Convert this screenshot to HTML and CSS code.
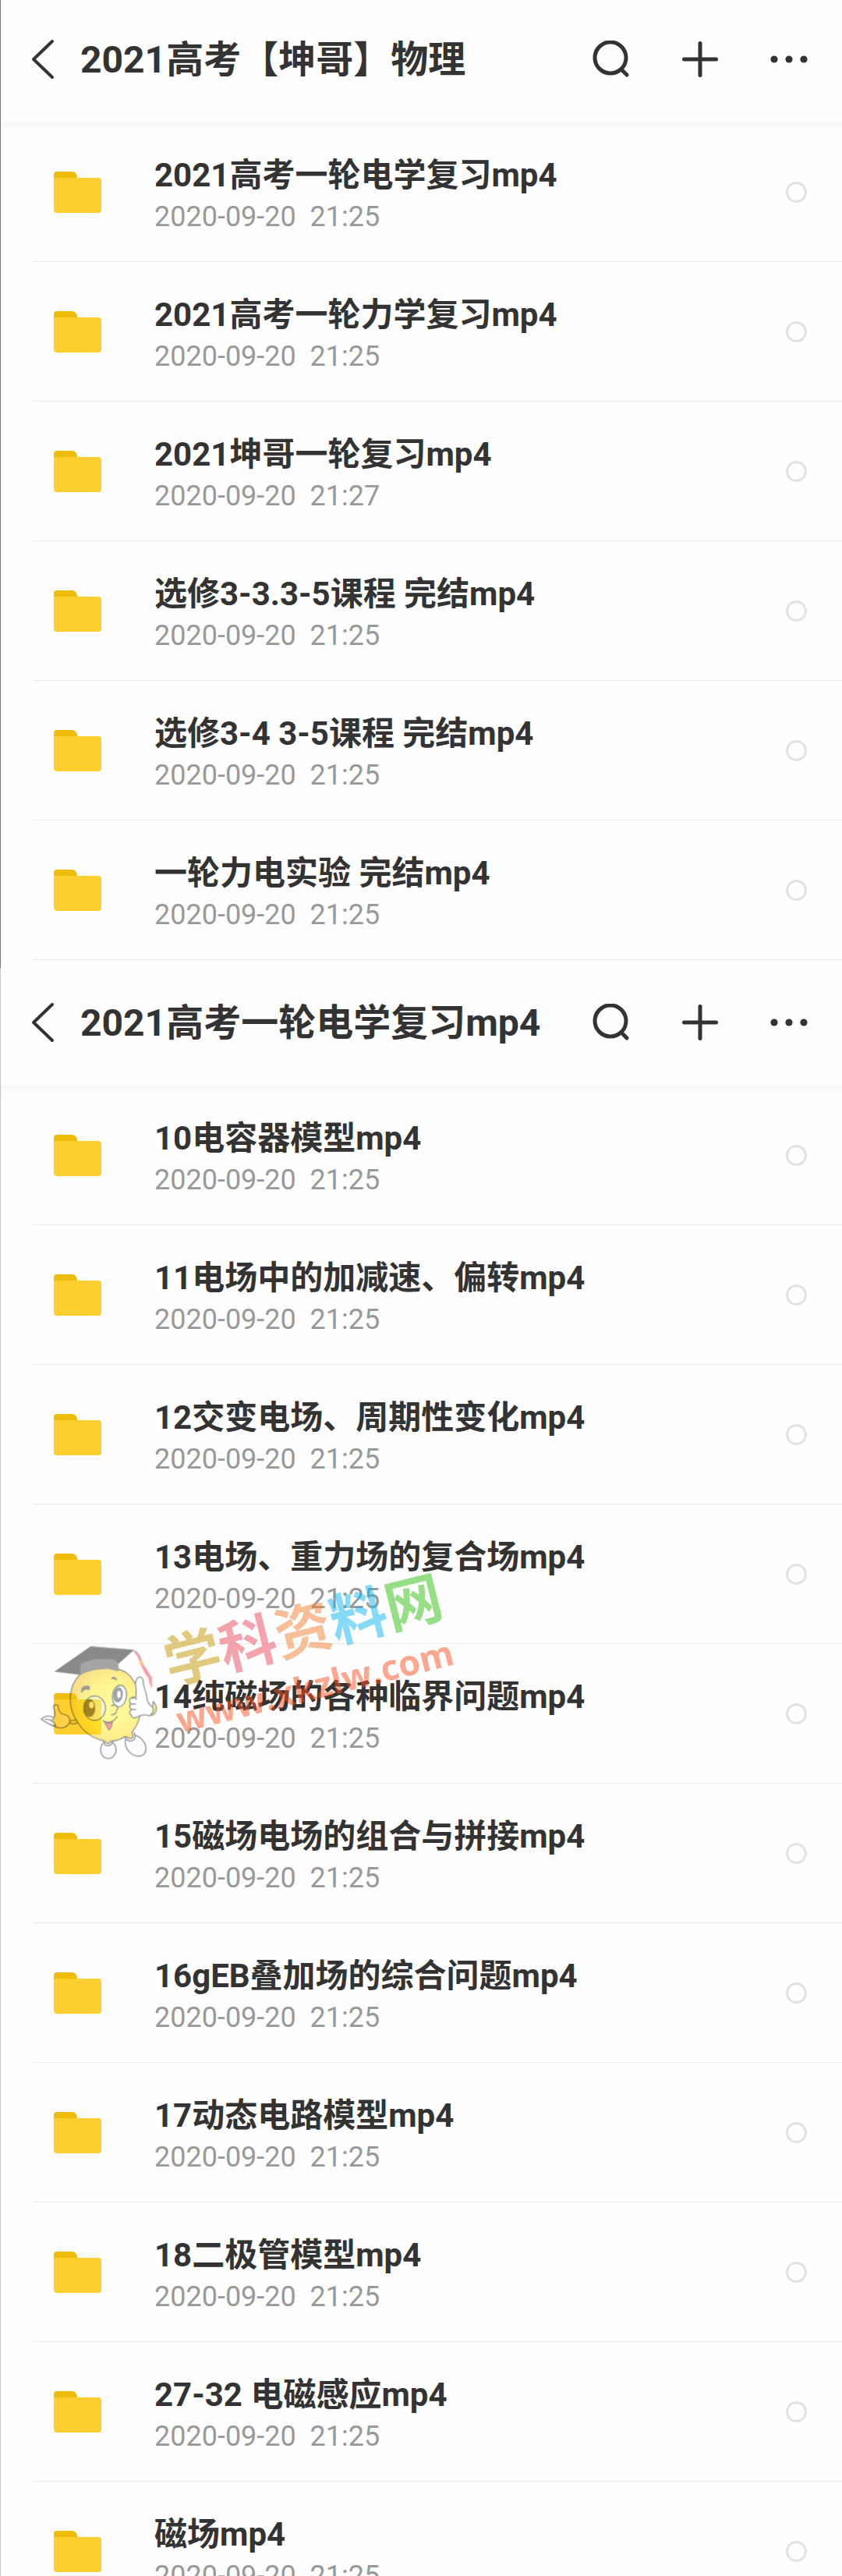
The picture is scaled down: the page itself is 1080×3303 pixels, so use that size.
FILE: index.html
```html
<!DOCTYPE html>
<html lang="zh-CN">
<head>
<meta charset="utf-8">
<meta name="viewport" content="width=device-width, initial-scale=1">
<title>2021高考【坤哥】物理</title>
<link rel="stylesheet" href="styles.css">
</head>
<body>
<svg class="sprite" aria-hidden="true">
  <symbol id="folder" viewBox="0 0 61 53">
    <path d="M0 12V4a4 4 0 0 1 4-4h19c4 0 7 3 7 8v4z" fill="#f0bc0a"/>
    <path d="M0 8h57a4 4 0 0 1 4 4v37a4 4 0 0 1-4 4H4a4 4 0 0 1-4-4z" fill="#ffcf30"/>
  </symbol>
  <symbol id="back" viewBox="0 0 30 52">
    <path d="M27 3L3 26l24 23" fill="none" stroke="#333" stroke-width="4" stroke-linecap="round" stroke-linejoin="round"/>
  </symbol>
  <symbol id="search" viewBox="0 0 48 48">
    <circle cx="23" cy="22" r="20" fill="none" stroke="#333" stroke-width="5"/>
    <path d="M38 38l6 6" stroke="#333" stroke-width="5" stroke-linecap="round"/>
  </symbol>
  <symbol id="plus" viewBox="0 0 48 48">
    <path d="M3.500 24h41M24 3.500v41" stroke="#333" stroke-width="5" stroke-linecap="round"/>
  </symbol>
  <symbol id="more" viewBox="0 0 48 48">
    <g fill="#333"><circle cx="5" cy="24" r="4.600"/><circle cx="24" cy="24" r="4.600"/><circle cx="43" cy="24" r="4.600"/></g>
  </symbol>
</svg>

<main class="app">
  <section class="screen screen-root">
    <header class="bar">
      <button class="back" type="button" aria-label="返回"><svg><use href="#back"/></svg></button>
      <h1 class="title">2021高考【坤哥】物理</h1>
      <div class="actions">
        <button type="button" aria-label="搜索"><svg><use href="#search"/></svg></button>
        <button type="button" aria-label="新建"><svg><use href="#plus"/></svg></button>
        <button type="button" aria-label="更多"><svg><use href="#more"/></svg></button>
      </div>
    </header>
    <ul class="files">
      <li><label class="file"><svg class="folder"><use href="#folder"/></svg><span class="info"><span class="name">2021高考一轮电学复习mp4</span><span class="date">2020-09-20  21:25</span></span><input type="checkbox"></label></li>
      <li><label class="file"><svg class="folder"><use href="#folder"/></svg><span class="info"><span class="name">2021高考一轮力学复习mp4</span><span class="date">2020-09-20  21:25</span></span><input type="checkbox"></label></li>
      <li><label class="file"><svg class="folder"><use href="#folder"/></svg><span class="info"><span class="name">2021坤哥一轮复习mp4</span><span class="date">2020-09-20  21:27</span></span><input type="checkbox"></label></li>
      <li><label class="file"><svg class="folder"><use href="#folder"/></svg><span class="info"><span class="name">选修3-3.3-5课程 完结mp4</span><span class="date">2020-09-20  21:25</span></span><input type="checkbox"></label></li>
      <li><label class="file"><svg class="folder"><use href="#folder"/></svg><span class="info"><span class="name">选修3-4 3-5课程 完结mp4</span><span class="date">2020-09-20  21:25</span></span><input type="checkbox"></label></li>
      <li><label class="file"><svg class="folder"><use href="#folder"/></svg><span class="info"><span class="name">一轮力电实验 完结mp4</span><span class="date">2020-09-20  21:25</span></span><input type="checkbox"></label></li>
    </ul>
  </section>

  <section class="screen screen-sub">
    <header class="bar">
      <button class="back" type="button" aria-label="返回"><svg><use href="#back"/></svg></button>
      <h2 class="title">2021高考一轮电学复习mp4</h2>
      <div class="actions">
        <button type="button" aria-label="搜索"><svg><use href="#search"/></svg></button>
        <button type="button" aria-label="新建"><svg><use href="#plus"/></svg></button>
        <button type="button" aria-label="更多"><svg><use href="#more"/></svg></button>
      </div>
    </header>
    <ul class="files">
      <li><label class="file"><svg class="folder"><use href="#folder"/></svg><span class="info"><span class="name">10电容器模型mp4</span><span class="date">2020-09-20  21:25</span></span><input type="checkbox"></label></li>
      <li><label class="file"><svg class="folder"><use href="#folder"/></svg><span class="info"><span class="name">11电场中的加减速、偏转mp4</span><span class="date">2020-09-20  21:25</span></span><input type="checkbox"></label></li>
      <li><label class="file"><svg class="folder"><use href="#folder"/></svg><span class="info"><span class="name">12交变电场、周期性变化mp4</span><span class="date">2020-09-20  21:25</span></span><input type="checkbox"></label></li>
      <li><label class="file"><svg class="folder"><use href="#folder"/></svg><span class="info"><span class="name">13电场、重力场的复合场mp4</span><span class="date">2020-09-20  21:25</span></span><input type="checkbox"></label></li>
      <li class="marked">
        <label class="file"><svg class="folder"><use href="#folder"/></svg><span class="info"><span class="name">14纯磁场的各种临界问题mp4</span><span class="date">2020-09-20  21:25</span></span><input type="checkbox"></label>
        <svg class="watermark" viewBox="0 -40 560 300">
          <defs>
            <radialGradient id="skin" cx="0.6" cy="0.5" r="0.6">
              <stop offset="0" stop-color="#fffb3c"/><stop offset="0.6" stop-color="#fdea20"/><stop offset="1" stop-color="#f5bd12"/>
            </radialGradient>
            <linearGradient id="iris" x1="0" y1="0" x2="1" y2="0.4">
              <stop offset="0" stop-color="#4da8c8"/><stop offset="0.5" stop-color="#d8f0f8"/><stop offset="1" stop-color="#fff"/>
            </linearGradient>
          </defs>
          <g opacity="0.5">
            <g transform="translate(0 60) scale(0.333)" stroke="#222" stroke-width="4" stroke-linejoin="round" stroke-linecap="round">
              <ellipse cx="297" cy="461" rx="30" ry="34" fill="#f4f9ff"/>
              <ellipse cx="402" cy="445" rx="34" ry="46" transform="rotate(-42 402 445)" fill="#f4f9ff"/>
              <path d="M278 425q2 22 20 20q17-2 15-20M360 405q4 25 25 22q22-5 12-32" fill="#ddd"/>
              <path d="M150 348q16 2 26-4v14q-12 6-26 2z" fill="#f5bd12"/>
              <path d="M470 275q20 22 8 44q-12 14-30 8l2-12q18-4 20-40z" fill="#fde420"/>
              <path d="M150 270Q150 205 192 168Q240 145 300 147Q352 145 382 178Q420 225 423 290Q420 360 388 392L392 410Q384 424 370 412L362 410Q335 428 308 427L300 436Q288 438 282 427Q215 412 182 360Q152 320 150 270Z" fill="url(#skin)"/>
              <path d="M230 62l166 14-60 54q-70-24-134 0l-12 42-101-12z" fill="#151515" stroke="none"/>
              <path d="M190 170q-3-28 5-42q50-24 130-12q14 14 10 42q-70-26-145 12z" fill="#4c4c4c" stroke="#444" stroke-width="2"/>
              <path d="M230 64l164 12" fill="none" stroke="#777" stroke-width="3" stroke-dasharray="4 4"/>
              <path d="M192 244q-4-28 20-30q20-2 12 18q-18-8-32 12z" fill="#333" stroke="none"/>
              <path d="M308 188q2-12 14-7q10 5 8 13q-10-7-22-6z" fill="#333" stroke="none"/>
              <ellipse cx="340" cy="254" rx="27" ry="42" fill="url(#iris)" transform="rotate(8 340 254)"/>
              <ellipse cx="335" cy="250" rx="15" ry="26" fill="#555" transform="rotate(8 335 250)"/>
              <ellipse cx="338" cy="248" rx="7" ry="13" fill="#fff" stroke="none"/>
              <ellipse cx="244" cy="301" rx="42" ry="47" fill="url(#iris)" fill-opacity="0.5"/>
              <ellipse cx="225" cy="300" rx="19" ry="32" fill="#4a3510"/>
              <ellipse cx="232" cy="289" rx="9" ry="13" fill="#fff0a0" stroke="none"/>
              <path d="M309 292q15-8 23 4q3 12-5 14M308 325q12 4 20-9" fill="none"/>
              <path d="M277 350q32 16 54-16" fill="none"/>
              <path d="M283 355q18 8 30 0q-2 20-12 32q-12-12-18-32z" fill="#ef3940" stroke-width="3"/>
              <path d="M39 343q22-18 48-5q10-12-2-43q6-12 18-4q4 34 24 34q24 6 22 28q-10 26-42 24q-26-6-68-34z" fill="#fbd060"/>
              <path d="M39 343q22-20 48-6q-2 10-10 12q14 8 18 20q-30-4-56-26z" fill="#fff"/>
              <path d="M53 344q22-2 34 12" fill="none"/>
              <path d="M385 328q-12-12 1-22q-12-10-3-21q-10-16 3-25q8-4 18-2q2-26-2-50q0-24 16-28q16 2 14 28q8 28 14 50q-2 22 24 42q4 22-16 30q-24-10-52 8q-14 2-17-10z" fill="#fff"/>
              <path d="M386 306h16M383 285h18M388 262q10-1 18 4" fill="none"/>
              <path d="M388 78q28-4 40 48q20 30 38 58l-1 42q-12-20-14-42q-12-10-30-52q-10-36-33-54z" fill="#ee4450" stroke="none"/>
              <circle cx="424" cy="127" r="8" fill="#f59a30" stroke="none"/>
            </g>
            <g transform="translate(178 130) rotate(-14)">
              <text class="mark-cn"><tspan fill="#c19701">学</tspan><tspan fill="#eb475b">科</tspan><tspan fill="#f17f31">资</tspan><tspan fill="#0db7f7">料</tspan><tspan fill="#31c111">网</tspan></text>
            </g>
            <text class="mark-url" transform="translate(191 192) rotate(-14)" fill="#ff4f1f">www.xkzlw.com</text>
          </g>
        </svg>
      </li>
      <li><label class="file"><svg class="folder"><use href="#folder"/></svg><span class="info"><span class="name">15磁场电场的组合与拼接mp4</span><span class="date">2020-09-20  21:25</span></span><input type="checkbox"></label></li>
      <li><label class="file"><svg class="folder"><use href="#folder"/></svg><span class="info"><span class="name">16gEB叠加场的综合问题mp4</span><span class="date">2020-09-20  21:25</span></span><input type="checkbox"></label></li>
      <li><label class="file"><svg class="folder"><use href="#folder"/></svg><span class="info"><span class="name">17动态电路模型mp4</span><span class="date">2020-09-20  21:25</span></span><input type="checkbox"></label></li>
      <li><label class="file"><svg class="folder"><use href="#folder"/></svg><span class="info"><span class="name">18二极管模型mp4</span><span class="date">2020-09-20  21:25</span></span><input type="checkbox"></label></li>
      <li><label class="file"><svg class="folder"><use href="#folder"/></svg><span class="info"><span class="name">27-32 电磁感应mp4</span><span class="date">2020-09-20  21:25</span></span><input type="checkbox"></label></li>
      <li><label class="file"><svg class="folder"><use href="#folder"/></svg><span class="info"><span class="name">磁场mp4</span><span class="date">2020-09-20  21:25</span></span><input type="checkbox"></label></li>
    </ul>
  </section>
</main>
</body>
</html>
```

FILE: styles.css
```css
* {
  box-sizing: border-box;
}

body {
  margin: 0;
  background: #fefefe;
  color: #333;
  font-family: Roboto, "Noto Sans CJK SC", sans-serif;
}

.sprite {
  position: absolute;
  width: 0;
  height: 0;
}

.app {
  height: 100vh;
  overflow: hidden;
}

.screen-root {
  padding: 6px 0 10px;
  border-left: 1px solid #777;
}

.screen-sub {
  border-left: 1px solid #c4c4c4;
}

/* Title bar */
.bar {
  display: flex;
  align-items: center;
  padding: 39px 44px 50px 39px;
}

.bar button {
  display: block;
  padding: 0;
  border: 0;
  background: none;
}

.bar svg {
  display: block;
  width: 48px;
  height: 48px;
}

.bar .back {
  flex: none;
  width: 63px;
}

.bar .back svg {
  width: 30px;
  height: 52px;
}

.title {
  flex: 1;
  margin: 0;
  padding-top: 2px;
  font-size: 48px;
  font-weight: 700;
  line-height: 60px;
  white-space: nowrap;
}

.actions {
  display: flex;
  gap: 66px;
}

/* File list */
.files {
  margin: 0;
  padding: 0;
  list-style: none;
  background: linear-gradient(#f6f6f6, #fefefe 12px);
}

.files li {
  margin-left: 41px;
  border-bottom: 1px solid #ececec;
}

.file {
  display: flex;
  align-items: center;
  padding: 32px 45px 32px 27px;
}

.folder {
  flex: none;
  width: 61px;
  height: 53px;
}

.info {
  flex: 1;
  padding: 8px 0 0 68px;
}

.name,
.date {
  display: block;
  white-space: pre;
}

.name {
  font-size: 42px;
  font-weight: 700;
  line-height: 56px;
}

.date {
  color: #999;
  font-size: 36px;
  line-height: 50px;
}

.file input {
  appearance: none;
  flex: none;
  width: 27px;
  height: 27px;
  margin: 0;
  border: 3px solid #e2e2e2;
  border-radius: 50%;
}

/* Site mark laid over the list */
.marked {
  position: relative;
}

.watermark {
  position: absolute;
  top: -118px;
  left: -2px;
  width: 560px;
  height: 300px;
  pointer-events: none;
}

.mark-cn {
  font-family: "Noto Sans CJK SC", sans-serif;
  font-size: 73px;
  font-weight: 700;
}

.mark-url {
  font-family: "Open Sans", sans-serif;
  font-size: 45px;
  font-weight: 700;
}
```
